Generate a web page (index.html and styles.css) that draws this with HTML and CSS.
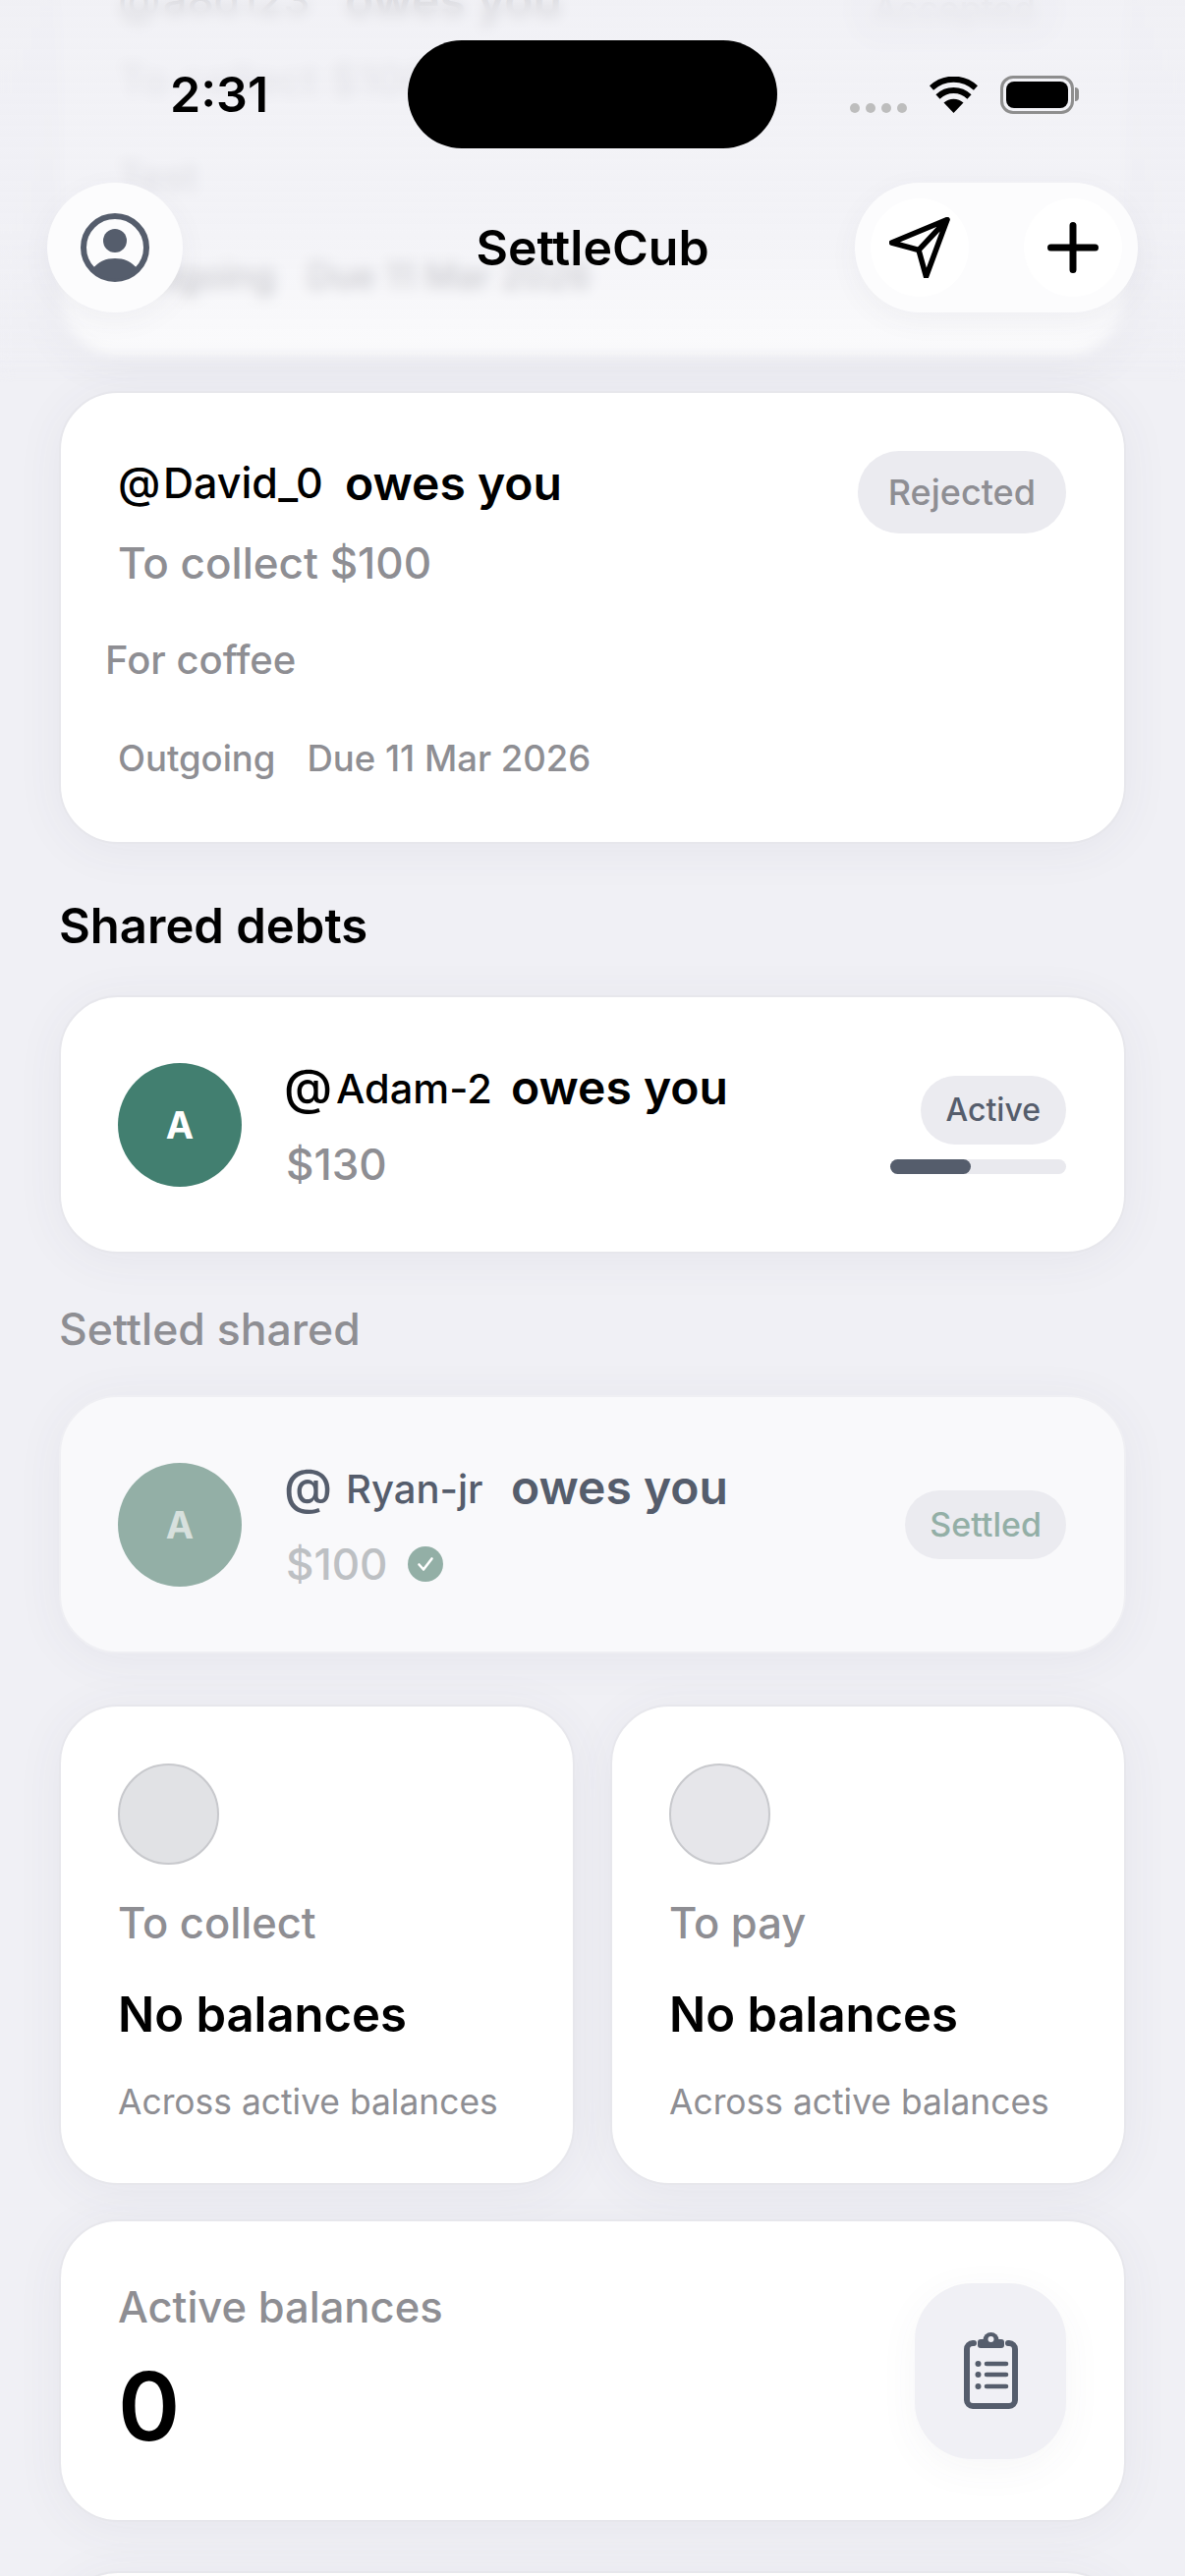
FILE: index.html
```html
<!DOCTYPE html>
<html lang="en">
<head>
    <meta charset="UTF-8">
    <meta name="viewport" content="width=device-width, initial-scale=1.0">
    <title>SettleCub</title>
    <link rel="stylesheet" href="styles.css">
</head>
<body>
    <div class="screen">
        <main class="content">
            <!-- scrolled under the header -->
            <div class="card debt-card debt-card-under">
                <div class="debt-top">
                    <div>
                        <div class="title"><span class="at">@</span><span class="handle">a8d123</span><span class="owes">owes you</span></div>
                        <div class="amount">To collect $100</div>
                    </div>
                    <span class="pill">Accepted</span>
                </div>
                <div class="note">Test</div>
                <div class="meta"><span>Outgoing</span><span>Due 11 Mar 2026</span></div>
            </div>

            <div class="card debt-card">
                <div class="debt-top">
                    <div>
                        <div class="title"><span class="at">@</span><span class="handle">David_0</span><span class="owes">owes you</span></div>
                        <div class="amount">To collect $100</div>
                    </div>
                    <span class="pill">Rejected</span>
                </div>
                <div class="note note-outdent">For coffee</div>
                <div class="meta"><span>Outgoing</span><span>Due 11 Mar 2026</span></div>
            </div>

            <h2 class="section-title">Shared debts</h2>
            <div class="card shared-card">
                <div class="avatar">A</div>
                <div class="shared-body">
                    <div class="title"><span class="at">@</span><span class="handle">Adam-2</span><span class="owes">owes you</span></div>
                    <div class="amount">$130</div>
                </div>
                <div class="shared-status">
                    <span class="pill pill-active">Active</span>
                    <div class="progress"><div class="progress-fill" style="width: 46%"></div></div>
                </div>
            </div>

            <h3 class="section-sub">Settled shared</h3>
            <div class="card shared-card settled">
                <div class="avatar">A</div>
                <div class="shared-body">
                    <div class="title"><span class="at">@</span><span class="handle">Ryan-jr</span><span class="owes">owes you</span></div>
                    <div class="amount">$100
                        <svg class="check" width="36" height="36" viewBox="0 0 36 36"><circle cx="18" cy="18" r="18" fill="#93afa6"/><path d="M11.5 18.500l4.500 5 8.500-11" fill="none" stroke="#fff" stroke-width="2.600" stroke-linecap="round" stroke-linejoin="round"/></svg>
                    </div>
                </div>
                <div class="shared-status">
                    <span class="pill pill-settled">Settled</span>
                </div>
            </div>

            <div class="tiles">
                <div class="card tile">
                    <div class="tile-dot"></div>
                    <div class="tile-label">To collect</div>
                    <div class="tile-value">No balances</div>
                    <div class="tile-hint">Across active balances</div>
                </div>
                <div class="card tile">
                    <div class="tile-dot tile-dot-light"></div>
                    <div class="tile-label">To pay</div>
                    <div class="tile-value">No balances</div>
                    <div class="tile-hint">Across active balances</div>
                </div>
            </div>

            <div class="card active-card">
                <div class="active-text">
                    <div class="tile-label">Active balances</div>
                    <div class="big-number">0</div>
                </div>
                <div class="icon-tile">
                    <svg width="55" height="78" viewBox="0 0 55 78">
                        <path d="M10 11H9a6 6 0 0 0-6 6v52a6 6 0 0 0 6 6h37a6 6 0 0 0 6-6V17a6 6 0 0 0-6-6h-1" fill="none" stroke="#555d6c" stroke-width="6" stroke-linecap="round"/>
                        <circle cx="27.5" cy="8" r="8" fill="#555d6c"/>
                        <rect x="14" y="7" width="27" height="9" rx="3" fill="#555d6c"/>
                        <circle cx="27.5" cy="7" r="3" fill="#f0f0f5"/>
                        <circle cx="14.5" cy="32" r="3" fill="#555d6c"/>
                        <circle cx="14.5" cy="43" r="3" fill="#555d6c"/>
                        <circle cx="14.5" cy="55" r="3" fill="#555d6c"/>
                        <path d="M23 32h20M23 43h20M23 55h20" stroke="#555d6c" stroke-width="4.600" stroke-linecap="round"/>
                    </svg>
                </div>
            </div>

            <div class="card next-card"></div>
        </main>

        <div class="top-fade"></div>

        <header class="top-bar">
            <div class="status-bar">
                <span class="time">2:31</span>
                <div class="island"></div>
                <div class="status-icons">
                    <div class="signal"><i></i><i></i><i></i><i></i></div>
                    <svg width="49" height="37" viewBox="0 0 49 37">
                        <path d="M24.500 37L14.500 26.500A15 15 0 0 1 34.500 26.500Z" fill="#000"/>
                        <path d="M8.500 20.500A23 23 0 0 1 40.500 20.500" fill="none" stroke="#000" stroke-width="6"/>
                        <path d="M2 11.500A33 33 0 0 1 47 11.500" fill="none" stroke="#000" stroke-width="6"/>
                    </svg>
                    <div class="battery"><div class="battery-level"></div></div>
                </div>
            </div>
            <nav class="nav-bar">
                <button class="glass-btn profile-btn">
                    <svg width="70" height="70" viewBox="0 0 70 70">
                        <circle cx="35" cy="35" r="32" fill="none" stroke="#555d6c" stroke-width="6"/>
                        <circle cx="35" cy="28" r="12" fill="#555d6c"/>
                        <path d="M12 57C18 49 26 46 35 46s17 3 23 11A32 32 0 0 1 12 57Z" fill="#555d6c"/>
                    </svg>
                </button>
                <h1 class="app-name">SettleCub</h1>
                <div class="glass-btn action-pill">
                    <span class="round-action">
                        <svg width="62" height="62" viewBox="0 0 62 62">
                            <path d="M59 2.500L2.500 26 30 33.500 37.500 60.500ZM59 2.500L30 33.500" fill="none" stroke="#000" stroke-width="5.500" stroke-linejoin="round" stroke-linecap="round"/>
                        </svg>
                    </span>
                    <span class="round-action">
                        <svg width="52" height="52" viewBox="0 0 52 52">
                            <path d="M26 3.500v45M3.500 26h45" fill="none" stroke="#000" stroke-width="7" stroke-linecap="round"/>
                        </svg>
                    </span>
                </div>
            </nav>
        </header>
    </div>
</body>
</html>
```
FILE: styles.css
```css
html, body {
    margin: 0;
    padding: 0;
    height: 100%;
    font-family: "Inter", "Liberation Sans", sans-serif;
    color: #000;
    background: #f0f0f5;
}
.screen {
    position: relative;
    width: 1206px;
    height: 2622px;
    overflow: hidden;
    background: #f0f0f5;
}
.content {
    display: flex;
    flex-direction: column;
    padding: 0 60px;
    margin-top: -98px;
}

/* cards */
.card {
    box-sizing: border-box;
    background: #fff;
    border: 2px solid #e7e7ec;
    border-radius: 60px;
    box-shadow: 0 6px 50px rgba(70, 70, 100, 0.06);
}
.debt-card {
    height: 461px;
    padding: 61px 59px 0 58px;
    margin-bottom: 35px;
}
.debt-card-under {
    padding-top: 65px;
}
.debt-top {
    display: flex;
    justify-content: space-between;
    align-items: flex-start;
}
.title {
    display: flex;
    align-items: center;
    height: 60px;
    font-size: 48px;
    font-weight: 600;
    white-space: nowrap;
}
.at {
    font-size: 44px;
    font-weight: 500;
    width: 46px;
}
.handle {
    font-size: 43px;
    font-weight: 500;
    width: 185px;
}
.owes {
    font-weight: 600;
}
.amount {
    display: flex;
    align-items: center;
    gap: 20px;
    height: 60px;
    margin-top: 22px;
    font-size: 44px;
    font-weight: 450;
    color: #8e8e93;
}
.pill {
    box-sizing: border-box;
    display: inline-flex;
    align-items: center;
    height: 84px;
    padding: 0 31px;
    margin-top: -2px;
    border-radius: 42px;
    background: #ebebf0;
    font-size: 36px;
    font-weight: 500;
    color: #8e8e93;
}
.note {
    margin: 39px 0 0;
    line-height: 60px;
    font-size: 40px;
    font-weight: 500;
    color: #8e8e93;
}
.note-outdent {
    margin-left: -13px;
}
.meta {
    display: flex;
    gap: 32px;
    margin-top: 40px;
    line-height: 60px;
    font-size: 36.5px;
    font-weight: 500;
    color: #8e8e93;
}

/* section headings */
.section-title {
    margin: 19px 0 0;
    line-height: 60px;
    font-size: 49px;
    font-weight: 600;
}
.section-sub {
    margin: 47px 0 0;
    line-height: 60px;
    font-size: 44.5px;
    font-weight: 500;
    color: #8e8e93;
}

/* shared debts */
.shared-card {
    display: flex;
    align-items: center;
    height: 263px;
    margin-top: 40px;
    padding: 0 59px 0 58px;
}
.avatar {
    flex-shrink: 0;
    display: flex;
    align-items: center;
    justify-content: center;
    width: 126px;
    height: 126px;
    border-radius: 50%;
    background: #427f70;
    color: #fff;
    font-size: 38px;
    font-weight: 700;
}
.shared-body {
    flex: 1;
    margin: 2px 0 0 45px;
}
.shared-body .amount {
    margin-top: 19px;
}
.shared-body .at {
    width: 53px;
    margin-left: -2px;
    font-size: 50px;
}
.shared-body .handle {
    width: 178px;
    margin-top: 4px;
    font-size: 41.5px;
}
.shared-status {
    display: flex;
    flex-direction: column;
    align-items: flex-end;
    gap: 15px;
}
.shared-status .pill {
    height: 70px;
    margin-top: 0;
    padding: 0 26px;
    border-radius: 35px;
    font-size: 32px;
}
.pill-active {
    color: #555d6c;
}
.progress {
    width: 179px;
    height: 15px;
    border-radius: 8px;
    background: #e9e9ee;
}
.progress-fill {
    height: 100%;
    border-radius: 8px;
    background: #555d6c;
}
.shared-card.settled {
    background: #f9f9fb;
    border-color: #efeff3;
    margin-top: 37px;
}
.settled .avatar {
    background: #93afa6;
    color: #d7e0dd;
}
.settled .title {
    color: #555d6c;
}
.settled .shared-body .at {
    width: 63px;
}
.settled .shared-body .handle {
    width: 168px;
    font-size: 40px;
}
.settled .amount {
    color: #bdc0c3;
}
.shared-status .pill-settled {
    padding: 0 25px;
    font-size: 34px;
    color: #93afa6;
}

/* summary tiles */
.tiles {
    display: grid;
    grid-template-columns: 1fr 1fr;
    gap: 36px;
    margin-top: 52px;
}
.tile {
    height: 489px;
    padding: 58px 40px 0 58px;
}
.tile-dot {
    box-sizing: border-box;
    width: 103px;
    height: 103px;
    border-radius: 50%;
    background: #e1e2e5;
    border: 2px solid #c8c9cd;
}
.tile-dot-light {
    background: #e6e6ea;
}
.tile-label {
    line-height: 60px;
    font-size: 43.5px;
    font-weight: 450;
    color: #8e8e93;
}
.tile-dot + .tile-label {
    margin-top: 29px;
}
.tile-value {
    margin-top: 34px;
    line-height: 60px;
    font-size: 49px;
    font-weight: 600;
}
.tile-hint {
    margin-top: 29px;
    line-height: 60px;
    font-size: 35.4px;
    color: #8e8e93;
}

/* active balances */
.active-card {
    display: flex;
    justify-content: space-between;
    align-items: center;
    height: 308px;
    margin-top: 35px;
    padding: 0 59px 0 58px;
}
.active-text {
    margin-bottom: 4px;
}
.big-number {
    margin-top: 16px;
    line-height: 110px;
    font-size: 96px;
    font-weight: 600;
}
.icon-tile {
    display: flex;
    align-items: center;
    justify-content: center;
    width: 154px;
    height: 179px;
    border-radius: 58px;
    background: #f0f0f5;
    box-shadow: 0 10px 40px rgba(70, 70, 100, 0.05);
}
.next-card {
    height: 300px;
    margin-top: 50px;
}

/* blurred strip the content scrolls under */
.top-fade {
    position: absolute;
    top: 0;
    left: 0;
    right: 0;
    height: 390px;
    background: linear-gradient(rgba(240, 240, 245, 0.9), rgba(240, 240, 245, 0.82) 60%, rgba(240, 240, 245, 0.35) 88%, rgba(240, 240, 245, 0));
    backdrop-filter: blur(7px);
    -webkit-mask-image: linear-gradient(#000 92%, transparent);
    mask-image: linear-gradient(#000 92%, transparent);
}

/* status bar + nav, on top of everything */
.top-bar {
    position: absolute;
    top: 0;
    left: 0;
    right: 0;
}
.status-bar {
    display: flex;
    align-items: center;
    height: 110px;
    padding-top: 41px;
}
.time {
    width: 415px;
    padding-left: 173px;
    box-sizing: border-box;
    font-size: 50px;
    font-weight: 600;
    line-height: 1;
}
.island {
    width: 376px;
    height: 110px;
    border-radius: 55px;
    background: #000;
}
.status-icons {
    display: flex;
    align-items: center;
    margin-left: 74px;
}
.signal {
    display: flex;
    gap: 6px;
    margin: 28px 23px 0 0;
}
.signal i {
    width: 10px;
    height: 10px;
    border-radius: 50%;
    background: #bdbdbd;
}
.battery {
    box-sizing: border-box;
    position: relative;
    width: 75px;
    height: 39px;
    margin-left: 23px;
    padding: 3px;
    border: 3px solid #8e8e8e;
    border-radius: 13px;
}
.battery::after {
    content: "";
    position: absolute;
    left: 73px;
    top: 9px;
    width: 4px;
    height: 14px;
    border-radius: 0 4px 4px 0;
    background: #8e8e8e;
}
.battery-level {
    height: 100%;
    border-radius: 8px;
    background: #000;
}
.nav-bar {
    display: grid;
    grid-template-columns: 1fr auto 1fr;
    align-items: center;
    height: 132px;
    margin-top: 35px;
    padding: 0 48px;
}
.glass-btn {
    display: flex;
    align-items: center;
    border: none;
    padding: 0;
    background: #fcfcfd;
    box-shadow: 0 8px 30px rgba(70, 70, 100, 0.05);
}
.profile-btn {
    justify-content: center;
    width: 138px;
    height: 132px;
    border-radius: 50%;
}
.app-name {
    margin: 0;
    font-size: 50px;
    font-weight: 600;
    line-height: 60px;
}
.action-pill {
    box-sizing: border-box;
    justify-self: end;
    justify-content: space-between;
    width: 288px;
    height: 132px;
    padding: 0 16px;
    border-radius: 66px;
}
.round-action {
    display: flex;
    align-items: center;
    justify-content: center;
    width: 100px;
    height: 100px;
    border-radius: 50%;
    background: #fff;
}
```
